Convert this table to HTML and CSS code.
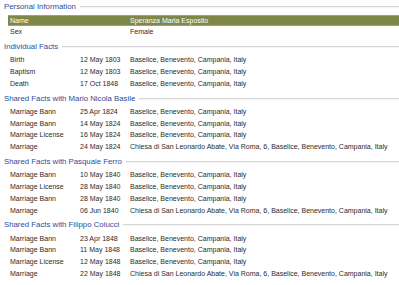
FILE: index.html
```html
<!DOCTYPE html>
<html>
<head>
<meta charset="utf-8">
<link rel="stylesheet" href="styles.css">
</head>
<body>
<div class="page">
  <section class="group">
    <div class="heading"><span class="title">Personal Information</span><span class="rule"></span></div>
    <div class="row selected"><span class="label">Name</span><span class="date"></span><span class="place">Speranza Maria Esposito</span></div>
    <div class="row"><span class="label">Sex</span><span class="date"></span><span class="place">Female</span></div>
  </section>
  <section class="group">
    <div class="heading"><span class="title">Individual Facts</span><span class="rule"></span></div>
    <div class="row"><span class="label">Birth</span><span class="date">12 May 1803</span><span class="place">Baselice, Benevento, Campania, Italy</span></div>
    <div class="row"><span class="label">Baptism</span><span class="date">12 May 1803</span><span class="place">Baselice, Benevento, Campania, Italy</span></div>
    <div class="row"><span class="label">Death</span><span class="date">17 Oct 1848</span><span class="place">Baselice, Benevento, Campania, Italy</span></div>
  </section>
  <section class="group">
    <div class="heading"><span class="title">Shared Facts with Mario Nicola Basile</span><span class="rule"></span></div>
    <div class="row"><span class="label">Marriage Bann</span><span class="date">25 Apr 1824</span><span class="place">Baselice, Benevento, Campania, Italy</span></div>
    <div class="row"><span class="label">Marriage Bann</span><span class="date">14 May 1824</span><span class="place">Baselice, Benevento, Campania, Italy</span></div>
    <div class="row"><span class="label">Marriage License</span><span class="date">16 May 1824</span><span class="place">Baselice, Benevento, Campania, Italy</span></div>
    <div class="row"><span class="label">Marriage</span><span class="date">24 May 1824</span><span class="place">Chiesa di San Leonardo Abate, Via Roma, 6, Baselice, Benevento, Campania, Italy</span></div>
  </section>
  <section class="group">
    <div class="heading"><span class="title">Shared Facts with Pasquale Ferro</span><span class="rule"></span></div>
    <div class="row"><span class="label">Marriage Bann</span><span class="date">10 May 1840</span><span class="place">Baselice, Benevento, Campania, Italy</span></div>
    <div class="row"><span class="label">Marriage License</span><span class="date">28 May 1840</span><span class="place">Baselice, Benevento, Campania, Italy</span></div>
    <div class="row"><span class="label">Marriage Bann</span><span class="date">28 May 1840</span><span class="place">Baselice, Benevento, Campania, Italy</span></div>
    <div class="row"><span class="label">Marriage</span><span class="date">06 Jun 1840</span><span class="place">Chiesa di San Leonardo Abate, Via Roma, 6, Baselice, Benevento, Campania, Italy</span></div>
  </section>
  <section class="group">
    <div class="heading"><span class="title">Shared Facts with Filippo Colucci</span><span class="rule"></span></div>
    <div class="row"><span class="label">Marriage Bann</span><span class="date">23 Apr 1848</span><span class="place">Baselice, Benevento, Campania, Italy</span></div>
    <div class="row"><span class="label">Marriage Bann</span><span class="date">11 May 1848</span><span class="place">Baselice, Benevento, Campania, Italy</span></div>
    <div class="row"><span class="label">Marriage License</span><span class="date">12 May 1848</span><span class="place">Baselice, Benevento, Campania, Italy</span></div>
    <div class="row"><span class="label">Marriage</span><span class="date">22 May 1848</span><span class="place">Chiesa di San Leonardo Abate, Via Roma, 6, Baselice, Benevento, Campania, Italy</span></div>
  </section>
</div>
</body>
</html>
```

FILE: styles.css
```css
html, body {
  margin: 0;
  padding: 0;
  background: #ffffff;
}
body {
  width: 399px;
  height: 285px;
  overflow: hidden;
  font-family: "Liberation Sans", Arial, sans-serif;
}
.page {
  display: flex;
  flex-direction: column;
  gap: 1.7px;
}
.group {
  display: flex;
  flex-direction: column;
}
.heading {
  height: 14.5px;
  display: flex;
  align-items: center;
  padding-left: 4px;
  gap: 4px;
}
.title {
  font-size: 7.8px;
  line-height: 14px;
  color: #2a4d9c;
  white-space: nowrap;
}
.rule {
  flex: 1;
  height: 0;
  border-top: 1px solid #d6d6d6;
  border-bottom: 1px solid #f4f4f4;
}
.row {
  display: grid;
  grid-template-columns: 70px 50px 1fr;
  margin-left: 8px;
  padding-left: 2px;
  height: 11.8px;
  line-height: 11.8px;
  font-size: 7px;
  color: #2b2b2b;
  white-space: nowrap;
}
.row.selected {
  background: #7e8748;
  color: #ffffff;
  box-shadow: inset 0 1px 0 #9ea378, inset 0 -1px 0 #9ea378;
}
.label, .date, .place {
  overflow: hidden;
}
```
